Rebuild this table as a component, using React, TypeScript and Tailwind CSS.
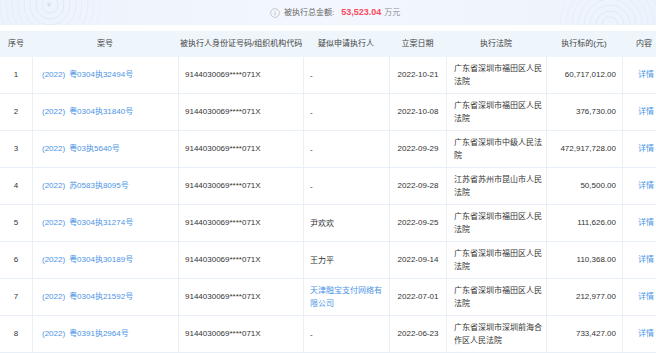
import React from "react";

type Row = {
  no: number;
  caseNo: string;
  applicant: string;
  applicantLink?: boolean;
  date: string;
  court: string;
  amount: string;
};

const rows: Row[] = [
  { no: 1, caseNo: "(2022)\u2002粤0304执32494号", applicant: "-", date: "2022-10-21", court: "广东省深圳市福田区人民法院", amount: "60,717,012.00" },
  { no: 2, caseNo: "(2022)\u2002粤0304执31840号", applicant: "-", date: "2022-10-08", court: "广东省深圳市福田区人民法院", amount: "376,730.00" },
  { no: 3, caseNo: "(2022)\u2002粤03执5640号", applicant: "-", date: "2022-09-29", court: "广东省深圳市中级人民法院", amount: "472,917,728.00" },
  { no: 4, caseNo: "(2022)\u2002苏0583执8095号", applicant: "-", date: "2022-09-28", court: "江苏省苏州市昆山市人民法院", amount: "50,500.00" },
  { no: 5, caseNo: "(2022)\u2002粤0304执31274号", applicant: "尹欢欢", date: "2022-09-25", court: "广东省深圳市福田区人民法院", amount: "111,626.00" },
  { no: 6, caseNo: "(2022)\u2002粤0304执30189号", applicant: "王力平", date: "2022-09-14", court: "广东省深圳市福田区人民法院", amount: "110,368.00" },
  { no: 7, caseNo: "(2022)\u2002粤0304执21592号", applicant: "天津融宝支付网络有限公司", applicantLink: true, date: "2022-07-01", court: "广东省深圳市福田区人民法院", amount: "212,977.00" },
  { no: 8, caseNo: "(2022)\u2002粤0391执2964号", applicant: "-", date: "2022-06-23", court: "广东省深圳市深圳前海合作区人民法院", amount: "733,427.00" },
];

const grid = "grid grid-cols-[32px_146px_125px_86px_57px_100px_76px_70px]";

function Rings({ className }: { className: string }) {
  return (
    <svg className={className} width="110" height="110" viewBox="0 0 110 110" fill="none">
      {[8, 14, 20, 26, 32, 38, 44, 50].map((r, i) => (
        <circle key={r} cx="55" cy="55" r={r} stroke="#d6e4f6" strokeOpacity={0.9 - i * 0.08} strokeWidth="0.8" />
      ))}
    </svg>
  );
}

export default function App() {
  return (
    <div
      className="w-[656px] h-[353px] overflow-hidden bg-white text-[8px] text-[#333333]"
      style={{ fontFamily: '"Liberation Sans", "Noto Sans CJK SC", sans-serif' }}
    >
      {/* banner */}
      <div className="relative h-[25px] overflow-hidden bg-gradient-to-r from-[#edf3fc] via-[#f3f7fd] to-[#edf3fc]">
        <Rings className="absolute left-[-5px] top-[-50px]" />
        <span className="absolute left-[47px] top-[0px] text-[7px] text-[#c9d9ee]">¥</span>
        <Rings className="absolute left-[555px] top-[-30px]" />
        <div className="relative flex h-full items-center pl-[270px]">
          <svg width="10" height="10" viewBox="0 0 10 10" className="mr-[4px]">
            <circle cx="5" cy="5" r="4.4" stroke="#b5b9bf" strokeWidth="0.7" fill="none" />
            <rect x="4.6" y="4.2" width="0.8" height="3.2" fill="#b5b9bf" />
            <rect x="4.6" y="2.6" width="0.8" height="0.9" fill="#b5b9bf" />
          </svg>
          <span className="text-[#666666]">被执行总金额:</span>
          <span className="ml-[7px] text-[9px] font-bold text-[#fd485e]">53,523.04</span>
          <span className="ml-[3px] text-[#8a8f96]">万元</span>
        </div>
      </div>

      {/* header */}
      <div className={`${grid} mt-[6px] h-[26px] items-center bg-[#eef5fb] text-[#444]`}>
        <div className="text-center">序号</div>
        <div className="text-center">案号</div>
        <div className="pl-[2px] whitespace-nowrap">被执行人身份证号码/组织机构代码</div>
        <div className="text-center">疑似申请执行人</div>
        <div className="text-center">立案日期</div>
        <div className="text-center">执行法院</div>
        <div className="text-center">执行标的(元)</div>
        <div className="pl-[14px]">内容</div>
      </div>

      {/* body */}
      {rows.map((r) => (
        <div key={r.no} className={`${grid} h-[37px] border-b border-[#e9eff6]`}>
          <div className="flex items-center justify-center">{r.no}</div>
          <div className="flex items-center border-l border-[#e9eff6] pl-[9px] text-[#4a94e6]">{r.caseNo}</div>
          <div className="flex items-center border-l border-[#e9eff6] pl-[6px]">9144030069****071X</div>
          <div
            className={`flex items-center border-l border-[#e9eff6] pl-[6px] pr-[4px] leading-[13px] ${
              r.applicantLink ? "text-[#4a94e6]" : ""
            }`}
          >
            {r.applicant}
          </div>
          <div className="flex items-center justify-center border-l border-[#e9eff6]">{r.date}</div>
          <div className="flex items-center border-l border-[#e9eff6] pl-[7px] pr-[4px] leading-[13px]">{r.court}</div>
          <div className="flex items-center justify-end border-l border-[#e9eff6] pr-[6px]">{r.amount}</div>
          <div className="flex items-center border-l border-[#e9eff6] pl-[15px] text-[#4a94e6]">详情</div>
        </div>
      ))}
    </div>
  );
}
